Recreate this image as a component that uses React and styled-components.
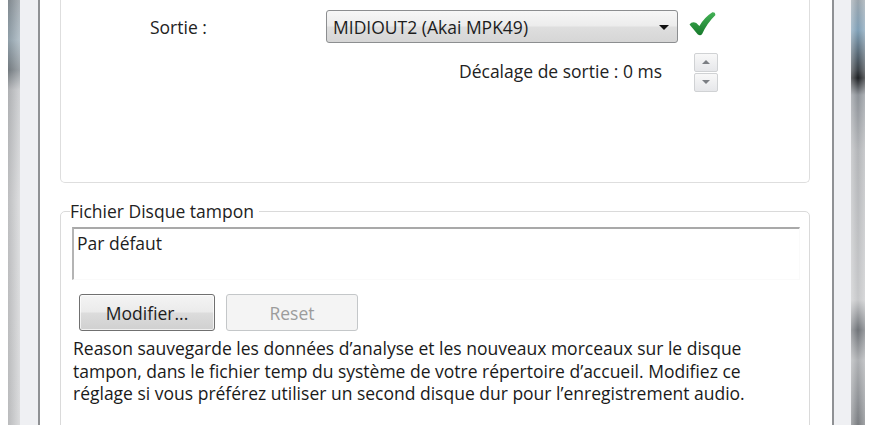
import React from 'react';
import styled, { createGlobalStyle } from 'styled-components';

const GlobalStyle = createGlobalStyle`
  html, body {
    margin: 0;
    padding: 0;
    background: #ffffff;
  }
  body {
    font-family: 'Open Sans', 'Noto Sans', sans-serif;
    color: #1d1d1d;
  }
`;

const Page = styled.div`
  display: flex;
  height: 425px;
  overflow: hidden;
  padding: 0 5px 0 8px;
  background: #fff;
`;

// window chrome on each side of the dialog
const Rail = styled.div`
  flex: 0 0 ${(p) => (p.$side === 'right' ? 14 : 12)}px;
  background: ${(p) =>
    p.$side === 'right'
      ? `linear-gradient(90deg, rgba(255,255,255,0.35), rgba(0,0,0,0) 50%, rgba(255,255,255,0.3)),
         linear-gradient(180deg, #9aa4ac 0px, #7f9fb6 30px, #3a4046 70px, #1c1f22 78px, #8d9298 95px, #b3b5b8 150px, #c7c8ca 300px, #6f7378 330px, #aeb0b3 360px, #8f9296 400px, #7a7d81 425px)`
      : `linear-gradient(90deg, rgba(0,0,0,0.1), rgba(255,255,255,0.25)),
         linear-gradient(180deg, #8e979e 0px, #9fb0bb 40px, #7e868c 70px, #c2c4c7 90px, #d3d4d6 200px, #cfd0d2 425px)`};
`;

const Track = styled.div`
  flex: 0 0 ${(p) => p.$w}px;
  background: #eff0f3;
`;

const Divider = styled.div`
  flex: 0 0 2px;
  background: #8f9194;
`;

const Content = styled.div`
  flex: 1;
  padding: 0 22px 0 20px;
  display: flex;
  flex-direction: column;
`;

const OutputPanel = styled.div`
  flex-shrink: 0;
  height: 183px;
  box-sizing: border-box;
  border: 1px solid #dedede;
  border-top: none;
  border-radius: 0 0 5px 5px;
  display: grid;
  grid-template-columns: 265px 352px auto;
  grid-template-rows: 33px 40px;
  row-gap: 9px;
  padding-top: 10px;
  align-items: center;
`;

const FieldLabel = styled.div`
  font-size: 17.5px;
  line-height: 22px;
  padding-left: 89px;
  color: #222;
`;

const Select = styled.div`
  height: 33px;
  box-sizing: border-box;
  border: 1px solid #8c8e90;
  border-radius: 3px;
  background: linear-gradient(180deg, #f7f7f7 0%, #ececec 48%, #dedede 52%, #d6d6d6 100%);
  display: flex;
  align-items: center;
  justify-content: space-between;
  padding: 0 8px 0 6px;
  font-size: 17.5px;
  color: #1d1d1d;
`;

const Caret = styled.span`
  width: 0;
  height: 0;
  border-left: 5px solid transparent;
  border-right: 5px solid transparent;
  border-top: 5px solid #111;
  margin-top: 2px;
`;

const CheckWrap = styled.div`
  padding-left: 11px;
  display: flex;
  align-items: center;
  margin-top: -6px;
`;

const OffsetLabel = styled.div`
  grid-column: 2;
  text-align: right;
  padding-right: 16px;
  font-size: 17.5px;
  line-height: 22px;
  color: #222;
  margin-top: -2px;
`;

const Spinner = styled.div`
  margin-left: 16px;
  width: 24px;
  display: flex;
  flex-direction: column;
  gap: 1px;
`;

const SpinButton = styled.div`
  height: 19px;
  box-sizing: border-box;
  border: 1px solid #d0d2d4;
  border-radius: 2px;
  background: linear-gradient(180deg, #f8f8f8, #e6e7ea);
  display: flex;
  align-items: center;
  justify-content: center;

  &::after {
    content: '';
    width: 0;
    height: 0;
    border-left: 4px solid transparent;
    border-right: 4px solid transparent;
    ${(p) =>
      p.$dir === 'up'
        ? 'border-bottom: 4px solid #7b7e83;'
        : 'border-top: 4px solid #7b7e83;'}
  }
`;

const Fieldset = styled.fieldset`
  flex-shrink: 0;
  margin: 16px 0 0;
  padding: 0 9px 0 11px;
  border: 1px solid #dadada;
  border-radius: 5px;
  min-height: 300px;
  min-inline-size: 0;
`;

const Legend = styled.legend`
  font-size: 17.5px;
  padding: 0 5px 0 0;
  margin-left: -2px;
  color: #222;
  line-height: 24px;
`;

const PathBox = styled.div`
  height: 53px;
  box-sizing: border-box;
  margin-top: 4px;
  border-top: 2px solid #a9a9a9;
  border-left: 2px solid #b4b4b4;
  border-right: 1px solid #fafafa;
  border-bottom: 1px solid #fafafa;
  padding: 2px 3px;
  font-size: 17.5px;
  line-height: 24px;
  color: #1d1d1d;
`;

const ButtonRow = styled.div`
  display: flex;
  gap: 11px;
  margin: 14px 0 0 7px;
`;

const Button = styled.button`
  width: ${(p) => p.$w}px;
  height: 37px;
  box-sizing: border-box;
  font-family: inherit;
  font-size: 17.5px;
  padding: 0;
  border-radius: 3px;
  border: 1px solid ${(p) => (p.disabled ? '#c4c7c9' : '#707070')};
  color: ${(p) => (p.disabled ? '#9c9c9c' : '#1d1d1d')};
  background: ${(p) =>
    p.disabled
      ? '#f4f4f4'
      : 'linear-gradient(180deg, #f4f4f4 0%, #ebebeb 48%, #dcdcdc 52%, #d0d0d0 100%)'};
  box-shadow: ${(p) => (p.disabled ? 'none' : 'inset 0 0 0 1px rgba(255,255,255,0.7)')};
`;

const Notice = styled.p`
  margin: 6px 0 0 1px;
  font-size: 17.5px;
  line-height: 22.5px;
  color: #1a1a1a;
  white-space: nowrap;
`;

const CheckMark = () => (
  <svg width="27" height="24" viewBox="0 0 26 23">
    <defs>
      <linearGradient id="chk" x1="0" y1="0" x2="0" y2="1">
        <stop offset="0" stopColor="#43b155" />
        <stop offset="1" stopColor="#177a2c" />
      </linearGradient>
    </defs>
    <path
      d="M0.5 12 Q3 8.5 7 10.5 L10 13.5 Q15 5 22.5 0.3 Q25.8 0 25.3 3 Q17.5 10.5 12.8 20.8 Q11 23.5 8.3 21.3 Z"
      fill="url(#chk)"
    />
  </svg>
);

export default function App() {
  return (
    <>
      <GlobalStyle />
      <Page>
        <Rail />
        <Track $w={18} />
        <Divider />
        <Content>
          <OutputPanel>
            <FieldLabel>Sortie :</FieldLabel>
            <Select>
              <span>MIDIOUT2 (Akai MPK49)</span>
              <Caret />
            </Select>
            <CheckWrap>
              <CheckMark />
            </CheckWrap>
            <OffsetLabel>Décalage de sortie : 0 ms</OffsetLabel>
            <Spinner>
              <SpinButton $dir="up" />
              <SpinButton $dir="down" />
            </Spinner>
          </OutputPanel>
          <Fieldset>
            <Legend>Fichier Disque tampon</Legend>
            <PathBox>Par défaut</PathBox>
            <ButtonRow>
              <Button $w={136}>Modifier...</Button>
              <Button $w={132} disabled>
                Reset
              </Button>
            </ButtonRow>
            <Notice>
              Reason sauvegarde les données d’analyse et les nouveaux morceaux sur le disque
              <br />
              tampon, dans le fichier temp du système de votre répertoire d’accueil. Modifiez ce
              <br />
              réglage si vous préférez utiliser un second disque dur pour l’enregistrement audio.
            </Notice>
          </Fieldset>
        </Content>
        <Divider />
        <Track $w={17} />
        <Rail $side="right" />
      </Page>
    </>
  );
}
